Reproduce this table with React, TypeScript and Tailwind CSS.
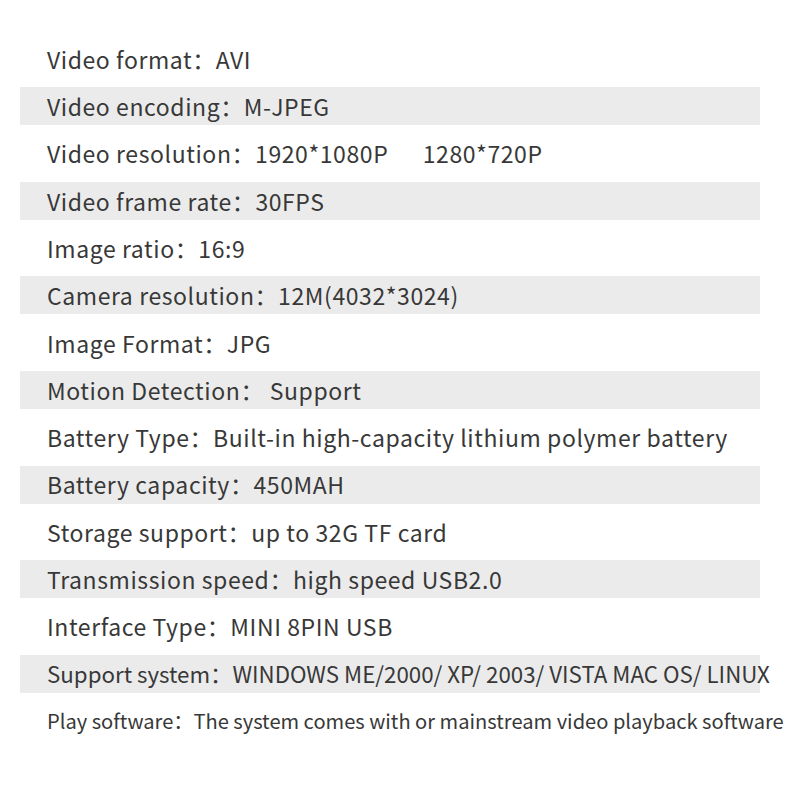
const rows = [
  "Video format：AVI",
  "Video encoding：M-JPEG",
  "Video resolution：1920*1080P      1280*720P",
  "Video frame rate：30FPS",
  "Image ratio：16:9",
  "Camera resolution：12M(4032*3024)",
  "Image Format：JPG",
  "Motion Detection： Support",
  "Battery Type：Built-in high-capacity lithium polymer battery",
  "Battery capacity：450MAH",
  "Storage support：up to 32G TF card",
  "Transmission speed：high speed USB2.0",
  "Interface Type：MINI 8PIN USB",
  "Support system：WINDOWS ME/2000/ XP/ 2003/ VISTA MAC OS/ LINUX",
  "Play software：The system comes with or mainstream video playback software",
];

const App = () => {
  return (
    <div className="w-[800px] h-[800px] bg-white pt-[40px] font-['Noto_Sans_CJK_SC','Noto_Sans',sans-serif] text-[#383838]">
      <div className="flex flex-col gap-[9.3px]">
        {rows.map((r, i) => (
          <div
            key={i}
            className={
              "ml-[20px] w-[740px] h-[38px] flex items-center pl-[27px] whitespace-pre font-normal " +
              (i % 2 === 1 ? "bg-[#ebebeb] " : "") +
              (i === 14 ? "text-[20.1px]" : i === 13 ? "text-[22.3px]" : "text-[23px] tracking-[0.58px]")
            }
          >
            {r}
          </div>
        ))}
      </div>
    </div>
  );
};

export default App;
